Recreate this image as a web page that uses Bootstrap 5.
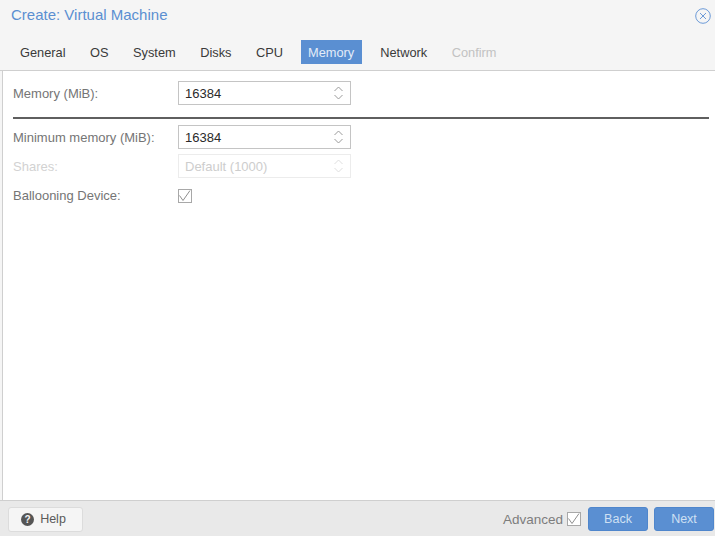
<!DOCTYPE html>
<html lang="en">
<head>
<meta charset="utf-8">
<title>Create: Virtual Machine</title>
<link rel="stylesheet" href="https://cdn.jsdelivr.net/npm/bootstrap@5.3.0/dist/css/bootstrap.min.css">
<style>
html,body{height:100%;overflow:hidden}
body{font-family:"Liberation Sans",Arial,sans-serif;font-size:13px;color:#555;background:#f5f5f5}
.vm-win{height:536px;width:715px}
.vm-head{height:30px;padding:6px 4px 0 11px}
.vm-title{font-size:15px;line-height:17px;color:#5b8fd1;margin:0;font-weight:400}
.vm-close{margin-top:2px}
.vm-tabs{height:41px;padding:10px 0 0 13px;border-bottom:1px solid #cfcfcf;gap:10.5px}
.vm-tab{height:24px;line-height:26px;padding:0 7px;color:#3a3a3a;font-size:12.8px;text-decoration:none}
.vm-tab.is-on{background:#5a8fd2;color:#e3ecf8;padding:0 7.5px;margin-right:1px}
.vm-tab.is-off{color:#c2c2c2}
.vm-body{background:#fff;margin-left:2px;border-left:1px solid #cfcfcf;padding:10px 6px 0 10px}
.vm-row{height:24px;margin-bottom:5px}
.vm-label{width:165px;color:#757575;line-height:26px;flex:none}
.vm-row.is-off .vm-label{color:#d2d2d2}
.vm-spin{width:173px;height:24px;border:1px solid #c4c4c4;padding:0 7px 0 6px;color:#2a2a2a;background:#fff;line-height:24px}
.vm-spin span{padding-top:1px}
.vm-row.is-off .vm-spin{border-color:#ececec;color:#cdcdcd}
.vm-rule{height:2px;background:#5f5f5f;margin:12px 0 6px;opacity:1;border:0}
.vm-tick{margin-top:6px}
.vm-foot{height:36px;background:#e9e9e9;border-top:1px solid #cfcfcf;padding:6px 1px 0 8px}
.vm-help{width:75px;height:25px;background:#f5f5f5;border:1px solid #dcdcdc;border-radius:3px;color:#5a5a5a;font-size:12.5px;padding:0 4px 0 0;gap:6px}
.vm-adv{color:#7d7d7d;font-size:13.5px;margin-right:7px;gap:4px}
.vm-adv span{padding-top:2px}
.vm-next{width:60px;height:24px;background:#5a8fd2;border:1px solid #4f86cc;border-radius:3px;color:#cfe0f3;font-size:12.5px;padding:0}
.vm-foot-btns{gap:6px}
</style>
</head>
<body>
<div class="vm-win d-flex flex-column">
  <div class="vm-head d-flex justify-content-between align-items-start">
    <h1 class="vm-title">Create: Virtual Machine</h1>
    <svg class="vm-close" width="16" height="16" viewBox="0 0 16 16" fill="none" stroke="#6d9bd8" aria-label="Close"><circle cx="8" cy="8" r="7.3"/><path d="M5 5l6 6M11 5l-6 6"/></svg>
  </div>
  <nav class="vm-tabs d-flex">
    <a class="vm-tab" href="#">General</a>
    <a class="vm-tab" href="#">OS</a>
    <a class="vm-tab" href="#">System</a>
    <a class="vm-tab" href="#">Disks</a>
    <a class="vm-tab" href="#">CPU</a>
    <a class="vm-tab is-on" href="#">Memory</a>
    <a class="vm-tab" href="#">Network</a>
    <a class="vm-tab is-off" href="#">Confirm</a>
  </nav>
  <main class="vm-body flex-grow-1">
    <div class="vm-row d-flex">
      <div class="vm-label">Memory (MiB):</div>
      <div class="vm-spin d-flex align-items-center justify-content-between"><span>16384</span>
        <svg width="9" height="14" viewBox="0 0 9 14" fill="none" stroke="#9a9a9a"><path d="M.5 5L4.5 1l4 4M.5 9l4 4 4-4"/></svg></div>
    </div>
    <hr class="vm-rule">
    <div class="vm-row d-flex">
      <div class="vm-label">Minimum memory (MiB):</div>
      <div class="vm-spin d-flex align-items-center justify-content-between"><span>16384</span>
        <svg width="9" height="14" viewBox="0 0 9 14" fill="none" stroke="#9a9a9a"><path d="M.5 5L4.5 1l4 4M.5 9l4 4 4-4"/></svg></div>
    </div>
    <div class="vm-row is-off d-flex">
      <div class="vm-label">Shares:</div>
      <div class="vm-spin d-flex align-items-center justify-content-between"><span>Default (1000)</span>
        <svg width="9" height="14" viewBox="0 0 9 14" fill="none" stroke="#dedede"><path d="M.5 5L4.5 1l4 4M.5 9l4 4 4-4"/></svg></div>
    </div>
    <div class="vm-row d-flex">
      <div class="vm-label">Ballooning Device:</div>
      <svg class="vm-tick" width="14" height="14" viewBox="0 0 14 14" fill="none" stroke="#8f8f8f"><rect x=".5" y=".5" width="13" height="13" fill="#fff" stroke="#a8a8a8"/><path d="M1.5 6.5l3.5 5L12 1.5"/></svg>
    </div>
  </main>
  <footer class="vm-foot d-flex justify-content-between align-items-start">
    <button class="vm-help btn d-flex align-items-center justify-content-center" type="button">
      <svg width="13" height="13" viewBox="0 0 13 13"><circle cx="6.5" cy="6.5" r="6.5" fill="#555"/><text x="6.5" y="10" text-anchor="middle" font-size="10" font-weight="700" font-family="Liberation Sans" fill="#f5f5f5">?</text></svg>
      <span>Help</span>
    </button>
    <div class="d-flex align-items-center">
      <div class="vm-adv d-flex align-items-center"><span>Advanced</span>
        <svg width="14" height="14" viewBox="0 0 14 14" fill="none" stroke="#8f8f8f"><rect x=".5" y=".5" width="13" height="13" fill="#fff" stroke="#a8a8a8"/><path d="M1.5 6.5l3.5 5L12 1.5"/></svg></div>
      <div class="vm-foot-btns d-flex">
        <button class="vm-next btn" type="button">Back</button>
        <button class="vm-next btn" type="button">Next</button>
      </div>
    </div>
  </footer>
</div>
<script src="https://cdn.jsdelivr.net/npm/bootstrap@5.3.0/dist/js/bootstrap.bundle.min.js"></script>
</body>
</html>
